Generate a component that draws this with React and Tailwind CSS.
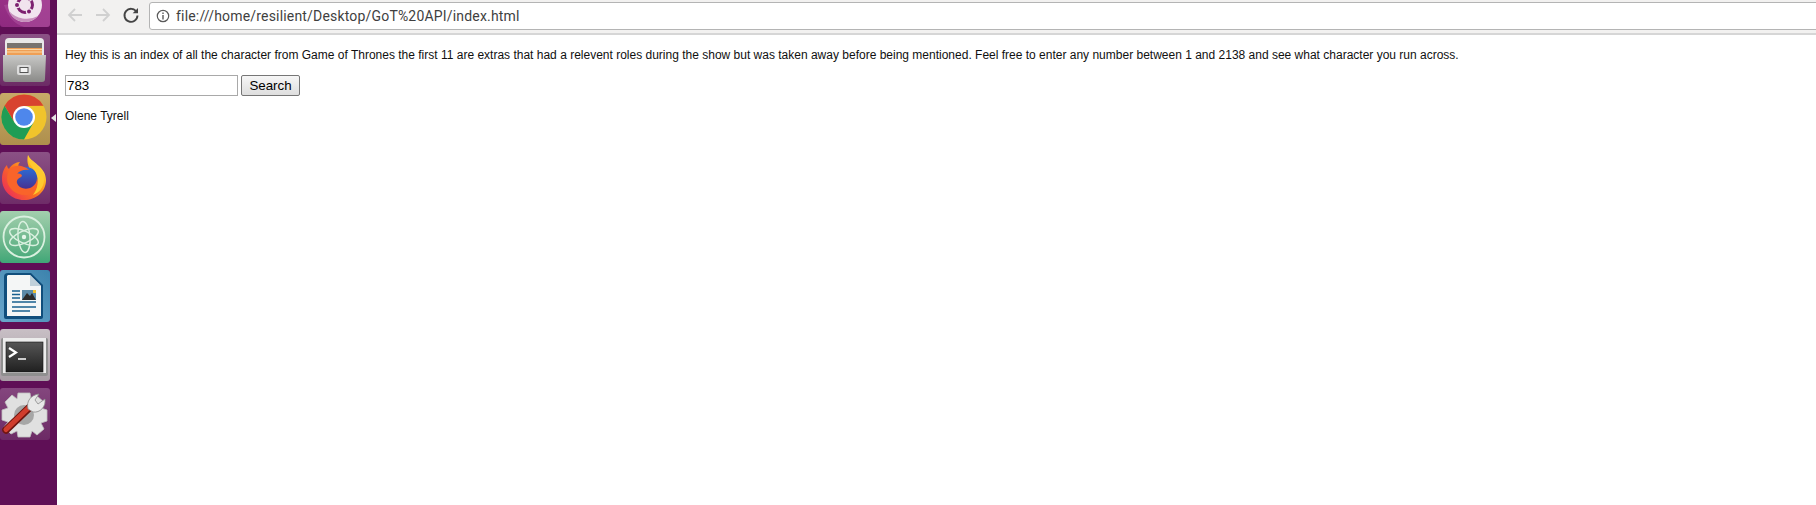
import React from "react";

const tile = "w-[50px] h-[52px] shrink-0 rounded-[3px] flex items-center justify-center overflow-hidden";

function Ubuntu() {
  return (
    <svg width="50" height="52" viewBox="0 0 50 52">
      <path d="M4 30 Q10 48 24 52 H50 V22 Z" fill="#b65aa6" opacity="0.45" />
      <circle cx="25" cy="30" r="17" fill="#f1e4ee" />
      <path d="M9 36 A17 17 0 0 0 38 41 A24 24 0 0 1 9 36Z" fill="#c891bd" />
      <circle cx="25" cy="30" r="7.5" fill="none" stroke="#7d2070" strokeWidth="3" />
      <circle cx="17" cy="30" r="2.6" fill="#7d2070" stroke="#f1e4ee" strokeWidth="1.2" />
      <circle cx="29" cy="36.5" r="2.6" fill="#7d2070" stroke="#f1e4ee" strokeWidth="1.2" />
      <circle cx="29" cy="23.5" r="2.6" fill="#7d2070" stroke="#f1e4ee" strokeWidth="1.2" />
    </svg>
  );
}

function Files() {
  return (
    <svg width="50" height="52" viewBox="0 0 50 52">
      <defs>
        <linearGradient id="fg" x1="0" y1="0" x2="0" y2="1">
          <stop offset="0" stopColor="#c8c8c6" />
          <stop offset="1" stopColor="#8a8a88" />
        </linearGradient>
      </defs>
      <path d="M5 8 Q5 4 9 4 H40 Q44 4 44 8 V22 H5Z" fill="#e8e8e8" />
      <rect x="7" y="9" width="35" height="6" fill="#77736f" />
      <rect x="7" y="14" width="35" height="8" fill="#ef9f55" />
      <path d="M7 15.5 H42 M7 18 H42" stroke="#f9d7a6" strokeWidth="1" />
      <path d="M3 21 H46 L45 45 Q45 48 42 48 H6 Q3 48 3 45Z" fill="url(#fg)" />
      <rect x="17" y="31" width="14" height="10" rx="2" fill="#dcdcdc" />
      <rect x="20" y="33.5" width="8" height="5" fill="#f3f3f3" stroke="#555" strokeWidth="1" />
    </svg>
  );
}

function Chrome() {
  return (
    <svg width="50" height="52" viewBox="0 0 50 52">
      <circle cx="24" cy="24" r="22.5" fill="#f0c42c" />
      <path d="M43.5 12.75 A22.5 22.5 0 0 0 4.5 12.75 L14.5 29.5 L24 13Z" fill="#d8432f" />
      <path d="M4.5 12.75 A22.5 22.5 0 0 0 24 46.5 L33.5 29.5 L14.5 29.5Z" fill="#1f9d55" />
      <circle cx="24" cy="24" r="11" fill="#fff" />
      <circle cx="24" cy="24" r="8.8" fill="#4e87ec" />
    </svg>
  );
}

function Firefox() {
  return (
    <svg width="50" height="52" viewBox="0 0 50 52">
      <defs>
        <linearGradient id="ff" x1="0.1" y1="0.9" x2="0.9" y2="0.2">
          <stop offset="0" stopColor="#ec2f58" />
          <stop offset="0.45" stopColor="#fb6a22" />
          <stop offset="0.8" stopColor="#ffb51f" />
          <stop offset="1" stopColor="#ffe04a" />
        </linearGradient>
        <linearGradient id="fb" x1="0.5" y1="0" x2="0.5" y2="1">
          <stop offset="0" stopColor="#2a6fd8" />
          <stop offset="1" stopColor="#4a2a8a" />
        </linearGradient>
      </defs>
      <path d="M28 3 C30 10 46 14 46 28 C46 40 36 48 24 48 C12 48 2 39 2 27 C2 21 4 16 7 13 C7 15 8 16 9 17 C11 13 16 10 20 10 C18 12 18 14 19 15 L30 17 C27 12 27 7 28 3Z" fill="url(#ff)" />
      <circle cx="26" cy="27" r="12" fill="url(#fb)" />
      <path d="M10 17 C14 13 20 13 24 15 C27 16 28 17 29 18 C24 17 19 19 17 22 C19 21 22 22 22 24 C20 26 16 27 17 31 C19 37 27 38 32 35 C35 33 37 30 37 26 C40 33 36 42 27 43 C16 44 7 36 7 27 C7 23 8 20 10 17Z" fill="#f9642a" />
      <path d="M28 3 C30 10 44 14 44 28 C44 35 39 41 33 43 C38 37 39 28 36 21 C33 15 27 11 28 3Z" fill="#ffc92e" />
    </svg>
  );
}

function Atom() {
  return (
    <svg width="50" height="52" viewBox="0 0 50 52" fill="none" stroke="#d9f0df">
      <circle cx="24" cy="26" r="20.5" strokeWidth="1.8" />
      <ellipse cx="24" cy="26" rx="15.5" ry="6" strokeWidth="1.5" transform="rotate(25 24 26)" />
      <ellipse cx="24" cy="26" rx="15.5" ry="6" strokeWidth="1.5" transform="rotate(-25 24 26)" />
      <ellipse cx="24" cy="26" rx="15.5" ry="6" strokeWidth="1.5" transform="rotate(85 24 26)" />
      <circle cx="24" cy="26" r="2.2" fill="#e6f6ea" stroke="none" />
    </svg>
  );
}

function Writer() {
  return (
    <svg width="50" height="52" viewBox="0 0 50 52">
      <path d="M8 3 H31 L43 15 V47 Q43 49 41 49 H6 Q4 49 4 47 V7 Q4 3 8 3Z" fill="#104e7c" />
      <path d="M8 5 H30 L41 16 V46 H7 V6Z" fill="#f4f6f6" />
      <path d="M30 5 L41 16 H30Z" fill="#bfd0da" />
      <rect x="22" y="20" width="14" height="10" fill="#5b8aa8" />
      <path d="M22 30 L27 23 L30 26 L32 23 L36 30Z" fill="#2b2b2b" />
      <rect x="33" y="20" width="3" height="3" fill="#f2c230" />
      <path d="M12 21 H20 M12 24.5 H20 M12 28 H20 M12 32 H36 M12 37 H36 M12 41 H30" stroke="#18608f" strokeWidth="1.5" />
    </svg>
  );
}

function Terminal() {
  return (
    <svg width="50" height="52" viewBox="0 0 50 52">
      <defs>
        <linearGradient id="tg" x1="0" y1="0" x2="0" y2="1">
          <stop offset="0" stopColor="#565656" />
          <stop offset="1" stopColor="#202020" />
        </linearGradient>
      </defs>
      <rect x="1" y="9" width="47" height="38" rx="2" fill="#8f8f8f" />
      <rect x="3" y="9" width="43" height="35" fill="#ececec" />
      <rect x="6" y="13" width="37" height="30" fill="url(#tg)" stroke="#111" strokeWidth="0.6" />
      <path d="M9 19 L16 23.5 L9 28" fill="none" stroke="#fff" strokeWidth="2.2" />
      <path d="M18 30 H26" stroke="#fff" strokeWidth="1.6" />
    </svg>
  );
}

function Settings() {
  return (
    <svg width="50" height="52" viewBox="0 0 50 52">
      <path d="M18 5 H30 L31 11 L37 8 L45 15 L41 20 L47 22 V33 L41 35 L44 41 L37 47 L32 43 L30 49 H18 L17 43 L11 46 L4 39 L8 34 L2 32 V22 L8 20 L5 14 L12 7 L17 11Z" fill="#e0e0e0" stroke="#c0c0c0" strokeWidth="0.8" />
      <circle cx="24" cy="27" r="10" fill="#a6a6a6" />
      <path d="M6 42 L31 18" stroke="#6f1510" strokeWidth="7.5" strokeLinecap="round" />
      <path d="M6 41.5 L31 17.5" stroke="#d03c2c" strokeWidth="5" strokeLinecap="round" />
      <path d="M28 21 C26 13 31 7 39 6 L35 12 L38 16 L45 11 C46 19 40 25 33 24Z" fill="#e8e8e8" stroke="#8c8c8c" strokeWidth="0.8" />
    </svg>
  );
}

const tiles = [
  ["bg-gradient-to-b from-[#a0348c] to-[#8f2a80]", Ubuntu],
  ["bg-gradient-to-b from-[#8b5185] to-[#6c2b65]", Files],
  ["bg-gradient-to-b from-[#c7aa68] to-[#ae8f4c]", Chrome],
  ["bg-gradient-to-b from-[#8b5185] to-[#6f2c68]", Firefox],
  ["bg-gradient-to-b from-[#a3cfae] to-[#3fa777]", Atom],
  ["bg-gradient-to-tr from-[#6aa6cb] to-[#3c83ad]", Writer],
  ["bg-gradient-to-b from-[#c8bfc5] to-[#a69ca3]", Terminal],
  ["bg-gradient-to-b from-[#84467e] to-[#6c2a65]", Settings],
];

export default function App() {
  return (
    <div className="flex w-[1816px] h-[505px] overflow-hidden bg-white text-black font-['Liberation_Sans',Arial,sans-serif]">
      <aside className="relative w-[57px] h-full shrink-0 bg-[#5f0f56] overflow-hidden">
        <div className="flex flex-col gap-[7px] mt-[-25px]">
          {tiles.map(([bg, Icon], i) => (
            <div key={i} className={`${tile} ${bg}`}>
              <Icon />
            </div>
          ))}
        </div>
        <div className="absolute left-[51px] top-[114px] w-0 h-0 border-y-[4px] border-y-transparent border-r-[5px] border-r-[#e4e4e4]" />
      </aside>

      <main className="flex-1 min-w-0 flex flex-col">
        <header className="h-[35px] shrink-0 bg-[#f2f1f0] border-b-2 border-[#d6d6d6] flex items-center pl-[9px]">
          <svg width="18" height="18" viewBox="0 0 18 18" fill="none" stroke="#d0d0d0" strokeWidth="1.8" className="mr-[10px] mt-[-3px]">
            <path d="M16 9 H3 M9 3 L3 9 L9 15" />
          </svg>
          <svg width="18" height="18" viewBox="0 0 18 18" fill="none" stroke="#d0d0d0" strokeWidth="1.8" className="mr-[10px] mt-[-3px]">
            <path d="M2 9 H15 M9 3 L15 9 L9 15" />
          </svg>
          <svg width="18" height="18" viewBox="0 0 18 18" fill="none" stroke="#444" strokeWidth="1.9" className="mr-[9px] mt-[-3px]">
            <path d="M14.6 6 A6.5 6.5 0 1 0 15.5 9.5" />
            <path d="M16 2 V7.3 H10.7 Z" fill="#444" stroke="none" />
          </svg>
          <div className="flex-1 self-start h-[28px] mt-[2px] mr-[-6px] bg-white border border-[#b4b4b4] rounded-[3px] flex items-center pl-[6px]">
            <svg width="14" height="14" viewBox="0 0 14 14" fill="none" stroke="#5a5a5a" className="mr-[6px]">
              <circle cx="7" cy="7" r="5.7" strokeWidth="1.2" />
              <path d="M7 6 V10.5" strokeWidth="1.4" />
              <path d="M7 3.4 V5" strokeWidth="1.4" />
            </svg>
            <span className="font-['Roboto',sans-serif] text-[14px] tracking-[0.18px] text-[#3f3f3f] whitespace-nowrap">file:///home/resilient/Desktop/GoT%20API/index.html</span>
          </div>
        </header>

        <div className="pl-2 text-[12px] leading-[14px] text-[#101010]">
          <p className="mt-[13px] whitespace-nowrap">
            Hey this is an index of all the character from Game of Thrones the first 11 are extras that had a relevent roles during the show but was taken away before being mentioned. Feel free to enter any number between 1 and 2138 and see what character you run across.
          </p>
          <div className="mt-[13px] flex items-center gap-[3px] h-[21px]">
            <input
              readOnly
              value="783"
              className="w-[173px] h-[21px] bg-white border border-[#a9a9a9] px-[1px] text-[13.33px] text-black outline-none font-['Liberation_Sans',Arial,sans-serif]"
            />
            <button className="w-[59px] h-[21px] rounded-[2px] border border-[#767676] bg-gradient-to-b from-[#f6f6f6] to-[#dedede] text-[13.33px] text-black leading-none">
              Search
            </button>
          </div>
          <p className="mt-[13px]">Olene Tyrell</p>
        </div>
      </main>
    </div>
  );
}
